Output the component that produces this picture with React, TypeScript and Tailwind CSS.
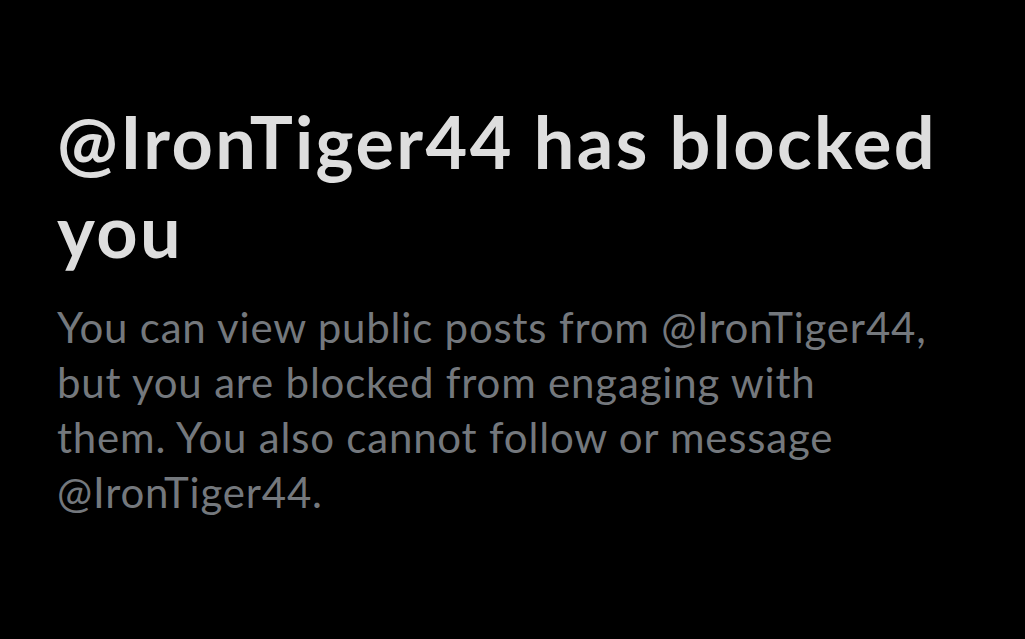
export default function App() {
  return (
    <div className="w-[1025px] h-[639px] bg-black overflow-hidden" style={{ fontFamily: 'Lato, "Noto Sans", sans-serif' }}>
      <div className="ml-[57px] pt-[97px] w-[882px]">
        <h1 className="text-[72px] leading-[89px] font-bold text-[#dedede] tracking-[2.4px]">
          @IronTiger44 has blocked
          <br />
          you
        </h1>
        <p className="mt-[25px] text-[42px] leading-[55px] text-[#74787d] tracking-[0.8px] whitespace-nowrap">
          You can view public posts from @IronTiger44,
          <br />
          but you are blocked from engaging with
          <br />
          them. You also cannot follow or message
          <br />
          @IronTiger44.
        </p>
      </div>
    </div>
  );
}
